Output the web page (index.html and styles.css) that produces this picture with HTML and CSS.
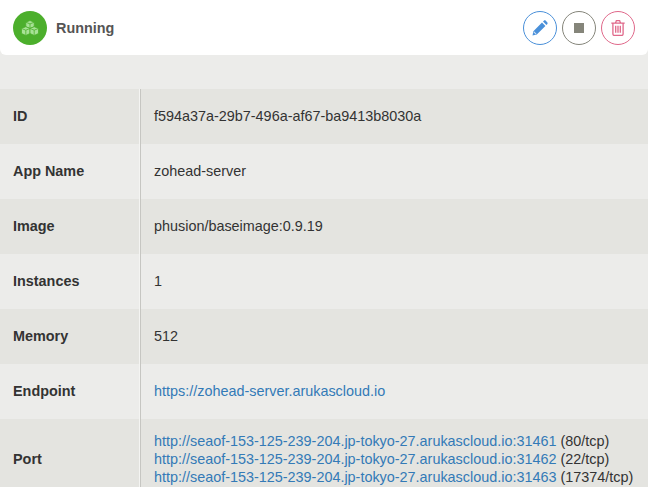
FILE: index.html
```
<!DOCTYPE html>
<html lang="en">
<head>
<meta charset="utf-8">
<title>Running</title>
<link rel="stylesheet" href="styles.css">
</head>
<body>
<header class="bar">
  <div class="status">
    <span class="status-icon">
      <svg width="18" height="16" viewBox="0 0 18 16"><g fill="#a8e296" stroke="#4caf2c" stroke-width=".8" stroke-linejoin="round"><path d="M9 .5l4.200 1.700v4.600L9 8.500 4.800 6.800V2.200z"/><path d="M9 3.900v4.600M4.800 2.200L9 3.900l4.200-1.700"/><path d="M4.800 6.700L9 8.400v5.100l-4.200 2-4.300-2V8.400z"/><path d="M4.800 10.200v5.300M.5 8.400l4.300 1.800L9 8.400"/><path d="M13.200 6.700l4.300 1.700v5.100l-4.300 2L9 13.500V8.400z"/><path d="M13.200 10.200v5.300M9 8.400l4.200 1.800 4.300-1.800"/></g></svg>
    </span>
    <span class="status-text">Running</span>
  </div>
  <div class="actions">
    <button class="round edit" aria-label="Edit">
      <svg width="16" height="16" viewBox="0 0 16 16"><path fill="#4a90d9" d="M.5 15.500l.9-4.300L10 2.600l3.400 3.400-8.600 8.600zM11 1.600l.8-.8c.6-.6 1.400-.6 2 0l1.400 1.400c.6.600.6 1.400 0 2l-.8.800z"/><path fill="#cfe2f6" d="M2.300 11.500l2.200 2.200-.8.800-2.200-2.200z"/></svg>
    </button>
    <button class="round stop" aria-label="Stop">
      <span class="stop-square"></span>
    </button>
    <button class="round trash" aria-label="Delete">
      <svg width="14" height="16" viewBox="0 0 14 16" fill="none" stroke="#e0688a" stroke-width="1.300"><path d="M.3 3.200h13.400M1.900 3.200v10.900c0 .8.500 1.300 1.200 1.300h7.800c.7 0 1.200-.5 1.200-1.300V3.200M4.400 3.200l.7-2c.1-.4.400-.6.800-.6h2.200c.4 0 .7.200.8.600l.7 2M4.700 5.800v7M7 5.800v7M9.300 5.800v7"/></svg>
    </button>
  </div>
</header>
<table class="info">
  <tr><th>ID</th><td>f594a37a-29b7-496a-af67-ba9413b8030a</td></tr>
  <tr><th>App Name</th><td>zohead-server</td></tr>
  <tr><th>Image</th><td>phusion/baseimage:0.9.19</td></tr>
  <tr><th>Instances</th><td>1</td></tr>
  <tr><th>Memory</th><td>512</td></tr>
  <tr><th>Endpoint</th><td><a href="#">https://zohead-server.arukascloud.io</a></td></tr>
  <tr class="port"><th>Port</th><td>
    <div><a href="#">http://seaof-153-125-239-204.jp-tokyo-27.arukascloud.io:31461</a> (80/tcp)</div>
    <div><a href="#">http://seaof-153-125-239-204.jp-tokyo-27.arukascloud.io:31462</a> (22/tcp)</div>
    <div><a href="#">http://seaof-153-125-239-204.jp-tokyo-27.arukascloud.io:31463</a> (17374/tcp)</div>
  </td></tr>
</table>
</body>
</html>
```
FILE: styles.css
```
html, body {
  margin: 0;
  height: 100%;
  overflow: hidden;
}
body {
  background: #ececea;
  font-family: "Liberation Sans", Arial, sans-serif;
  font-size: 14.4px;
  color: #333;
}
.bar {
  display: flex;
  align-items: center;
  justify-content: space-between;
  height: 55px;
  padding: 0 13px;
  box-sizing: border-box;
  background: #fff;
  border-radius: 0 0 6px 6px;
}
.status {
  display: flex;
  align-items: center;
  gap: 9px;
}
.status-icon {
  display: flex;
  align-items: center;
  justify-content: center;
  width: 34px;
  height: 34px;
  border-radius: 50%;
  background: #4caf2c;
}
.status-text {
  font-weight: 700;
  color: #555;
}
.actions {
  display: flex;
  gap: 5px;
}
.round {
  display: flex;
  align-items: center;
  justify-content: center;
  width: 34px;
  height: 34px;
  padding: 0;
  border-radius: 50%;
  border: 1px solid;
  background: #fff;
}
.edit { border-color: #4a90d9; }
.stop { border-color: #85857a; }
.trash { border-color: #e0688a; }
.stop-square {
  width: 10px;
  height: 10px;
  background: #85857a;
}
.info {
  width: 100%;
  margin-top: 34px;
  border-collapse: separate;
  border-spacing: 0;
  table-layout: fixed;
}
.info tr:nth-child(odd) { background: #e4e4e0; }
.info th, .info td {
  box-sizing: border-box;
  height: 55px;
  line-height: 18px;
  padding-top: 0;
  padding-bottom: 2px;
}
.info th {
  width: 141px;
  padding-left: 13px;
  text-align: left;
  font-weight: 700;
  border-right: 1px solid #c6c6c2;
  box-shadow: inset -1px 0 0 #f4f4f2;
}
.info td {
  padding-left: 13px;
}
.info .port th,
.info .port td {
  padding-top: 13px;
  padding-bottom: 13px;
}
a {
  color: #337ab7;
  text-decoration: none;
}
```
